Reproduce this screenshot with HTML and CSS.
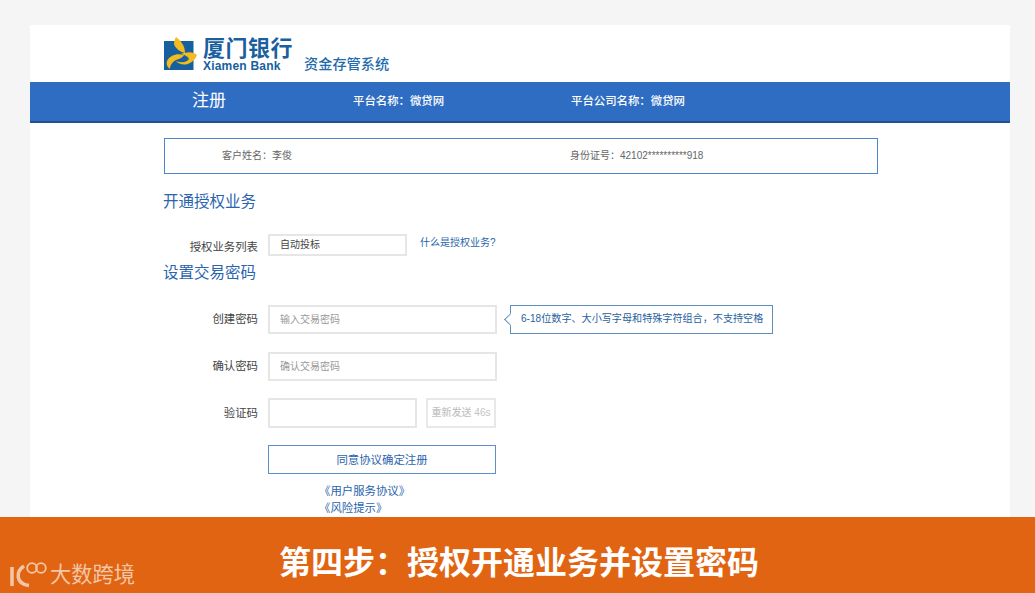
FILE: index.html
```html
<!DOCTYPE html>
<html lang="zh-CN">
<head>
<meta charset="utf-8">
<title>第四步&#xFF1A;授权开通业务并设置密码</title>
<link rel="stylesheet" href="styles.css">
</head>
<body>
<main class="card">
  <header class="brand">
    <svg class="logo" width="34" height="35" viewBox="0 0 34 35">
      <rect x="0" y="5" width="29.5" height="29" fill="#17609f"/>
      <path d="M12 1C16 4 21 9 21 17C16 16 11 12 10 8C10 5 11 3 12 1z" fill="#f4bb1e"/>
      <path d="M33 19C29 15 22 16 17 18C22 19 24 21 25 23C22 27 17 27 12 25C16 30 28 31 33 19z" fill="#f4bb1e"/>
      <path d="M20 19C13 17 6 19 3 25C2 28 3 31 6 33C6 28 10 24 15 23C17 22 19 21 20 19z" fill="#f4bb1e"/>
    </svg>
    <div class="bank">
      <div class="bank-cn">厦门银行</div>
      <div class="bank-en">Xiamen Bank</div>
    </div>
    <div class="system">资金存管系统</div>
  </header>
  <div class="band">
    <div class="band-title">注册</div>
    <div class="band-a">平台名称&#xFF1A;微贷网</div>
    <div class="band-b">平台公司名称&#xFF1A;微贷网</div>
  </div>
  <section class="content">
    <div class="info">
      <div class="info-a">客户姓名&#xFF1A;李俊</div>
      <div class="info-b">身份证号&#xFF1A;42102**********918</div>
    </div>
    <h2 class="heading first">开通授权业务</h2>
    <div class="row row-service">
      <div class="label">授权业务列表</div>
      <div class="box box-service">自动投标</div>
      <a class="help">什么是授权业务?</a>
    </div>
    <h2 class="heading second">设置交易密码</h2>
    <div class="row row-pwd">
      <div class="label">创建密码</div>
      <div class="box box-pwd ph">输入交易密码</div>
      <div class="tip">6-18位数字、大小写字母和特殊字符组合&#xFF0C;不支持空格</div>
    </div>
    <div class="row row-confirm">
      <div class="label">确认密码</div>
      <div class="box box-pwd ph">确认交易密码</div>
    </div>
    <div class="row row-code">
      <div class="label">验证码</div>
      <div class="box box-code"></div>
      <div class="resend">重新发送 46s</div>
    </div>
    <div class="submit">同意协议确定注册</div>
    <div class="links">
      <a>《用户服务协议》</a>
      <a>《风险提示》</a>
    </div>
  </section>
</main>
<footer class="footer">
  <div class="wm">
    <svg width="42" height="30" viewBox="0 0 42 30" fill="none" stroke="#f3c7a6">
      <path d="M3 9v19" stroke-width="3.5"/>
      <path d="M15 8C7 13 6 26 20 27.5" stroke-width="3.5"/>
      <circle cx="23" cy="10" r="4.8" stroke-width="1.8"/>
      <circle cx="32" cy="10" r="4.8" stroke-width="1.8"/>
    </svg>
    <span>大数跨境</span>
  </div>
  <div class="caption">第四步&#xFF1A;授权开通业务并设置密码</div>
</footer>
</body>
</html>
```
FILE: styles.css
```css
* { box-sizing: border-box; }
html, body { margin: 0; height: 593px; overflow: hidden; }
body {
  background: #f5f5f5;
  font-family: "Liberation Sans", "Noto Sans CJK SC", sans-serif;
  color: #555;
  display: flex;
  flex-direction: column;
  padding-top: 25px;
}
.card {
  width: 980px;
  height: 492px;
  margin-left: 30px;
  background: #fff;
  overflow: hidden;
  flex: none;
}
.brand {
  height: 57px;
  padding-left: 134px;
  display: flex;
  align-items: flex-start;
}
.logo { margin-top: 11px; flex: none; margin-right: 5px; }
.bank { margin-top: 12px; color: #17609f; font-weight: 700; width: 101px; }
.bank-cn { font-size: 22px; line-height: 24px; letter-spacing: 0.5px; color: #1a5f9e; }
.bank-en { font-size: 12px; line-height: 13px; letter-spacing: 0.2px; margin-top: -1px; }
.system { margin-top: 30px; font-size: 14.2px; line-height: 18px; font-weight: 500; color: #1f6bab; }
.band {
  height: 41px;
  background: #2e6dc2;
  border-bottom: 2px solid #23518f;
  color: #fff;
  display: flex;
  align-items: center;
  font-size: 11.4px;
  font-weight: 500;
  padding-bottom: 4px;
}
.band-title { margin-left: 162px; width: 161px; font-size: 17px; font-weight: 400; padding-bottom: 2px; }
.band-a { width: 218px; }
.content { padding: 15px 0 0 134px; }
.info {
  width: 714px;
  height: 36px;
  border: 1px solid #4d86c6;
  display: flex;
  align-items: center;
  font-size: 10px;
  color: #666;
  padding-bottom: 4px;
}
.info-a { margin-left: 57px; width: 348px; }
.heading { margin: 0 0 0 -1px; font-size: 15.5px; font-weight: 400; color: #2a64ad; line-height: 20px; }
.heading.first { margin-top: 18px; }
.heading.second { margin-top: 7px; }
.row { display: flex; align-items: flex-start; }
.row-service { margin-top: 22px; height: 22px; }
.row-pwd { margin-top: 22px; }
.row-confirm { margin-top: 18px; }
.row-code { margin-top: 17px; }
.label { width: 94px; margin-right: 10px; text-align: right; font-size: 11.4px; color: #444; line-height: 16px; }
.row-service .label { margin-top: 5px; }
.row-pwd .label, .row-confirm .label { margin-top: 6px; }
.row-code .label { margin-top: 7px; }
.box {
  border: 2px solid #e6e6e6;
  font-size: 10px;
  color: #444;
  padding: 0 0 3px 10px;
  display: flex;
  align-items: center;
}
.box-service { width: 139px; height: 22px; }
.box-pwd { width: 229px; height: 29px; }
.box-code { width: 149px; height: 30px; }
.ph { color: #999; }
.help { margin-left: 13px; margin-top: 2px; font-size: 10px; line-height: 14px; color: #2a64ad; }
.tip {
  position: relative;
  margin-left: 13px;
  width: 263px;
  height: 29px;
  border: 1px solid #5f8fbf;
  font-size: 10.1px;
  line-height: 26px;
  padding-left: 10px;
  color: #2a5f9e;
}
.tip::before {
  content: "";
  position: absolute;
  left: -5px;
  top: 9px;
  width: 8px;
  height: 8px;
  background: #fff;
  border-left: 1px solid #5f8fbf;
  border-bottom: 1px solid #5f8fbf;
  transform: rotate(45deg);
}
.resend {
  margin-left: 9px;
  width: 70px;
  height: 30px;
  border: 2px solid #e8e8e8;
  color: #c4c4c4;
  font-size: 10px;
  font-weight: 500;
  line-height: 25px;
  text-align: center;
}
.submit {
  margin: 17px 0 0 104px;
  width: 228px;
  height: 29px;
  border: 1px solid #5f8fc8;
  color: #2a64ad;
  font-size: 11.4px;
  line-height: 28px;
  text-align: center;
}
.links { margin: 9px 0 0 155px; font-size: 11.4px; line-height: 17px; color: #2a64ad; display: flex; flex-direction: column; }
.footer {
  flex: none;
  height: 76px;
  background: #e16413;
  display: flex;
  align-items: center;
  position: relative;
  justify-content: center;
}
.caption { color: #fff; font-size: 32px; font-weight: 700; line-height: 40px; margin-top: 16px; margin-left: 3px; }
.wm {
  position: absolute;
  left: 9px;
  top: 40px;
  display: flex;
  align-items: center;
  color: #f3c7a6;
  font-size: 21.25px;
  line-height: 28px;
}
.wm span { margin-left: -1px; padding-top: 4px; }
```
